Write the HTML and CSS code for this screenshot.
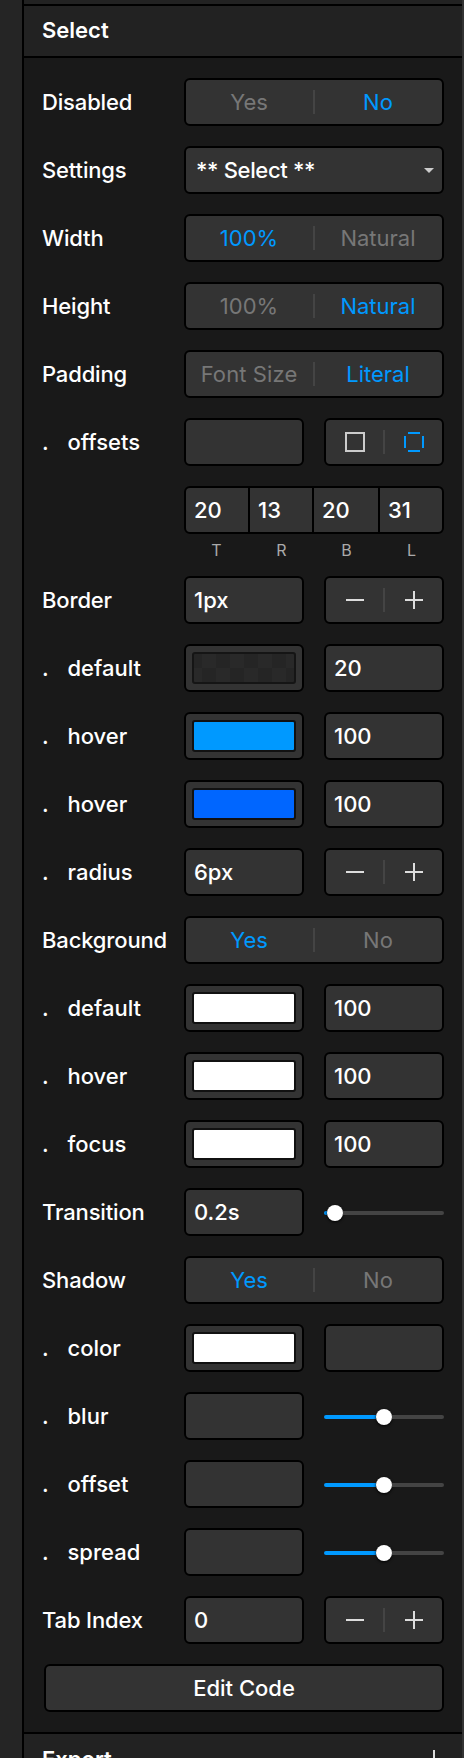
FILE: index.html
```html
<!DOCTYPE html>
<html lang="en">
<head>
<meta charset="utf-8">
<title>Select</title>
<link rel="stylesheet" href="styles.css">
</head>
<body>
<div class="app">
<main class="panel">
<header class="head">Select</header>
<section class="rows">
<div class="row"><span class="label">Disabled</span><div class="box seg"><span>Yes</span><i></i><span class="on">No</span></div></div>
<div class="row"><span class="label">Settings</span><div class="box select">** Select **<svg width="10" height="5" viewBox="0 0 10 5"><path d="M0 0h10L5 5z" fill="#ccc"/></svg></div></div>
<div class="row"><span class="label">Width</span><div class="box seg"><span class="on">100%</span><i></i><span>Natural</span></div></div>
<div class="row"><span class="label">Height</span><div class="box seg"><span>100%</span><i></i><span class="on">Natural</span></div></div>
<div class="row"><span class="label">Padding</span><div class="box seg"><span class="wide">Font Size</span><i></i><span class="on">Literal</span></div></div>
<div class="row"><span class="label sub">offsets</span><div class="box half"></div><div class="box half seg"><span><svg width="20" height="20"><path d="M1 1h18v18H1z" fill="none" stroke="#ccc" stroke-width="2"/></svg></span><i></i><span><svg width="20" height="20"><path d="M4 1h12M19 4v12M16 19H4M1 16V4" fill="none" stroke="#09f" stroke-width="2"/></svg></span></div></div>
<div class="row"><span class="label"></span><div class="box quad"><span>20</span><span>13</span><span>20</span><span>31</span></div></div>
<div class="sides"><span>T</span><span>R</span><span>B</span><span>L</span></div>
<div class="row"><span class="label">Border</span><div class="box half">1px</div><div class="box half seg"><span><svg width="18" height="18"><path d="M0 9h18" stroke="#ddd" stroke-width="2"/></svg></span><i></i><span><svg width="18" height="18"><path d="M0 9h18M9 0v18" stroke="#ddd" stroke-width="2"/></svg></span></div></div>
<div class="row"><span class="label sub">default</span><div class="box half well"><b class="checker"></b></div><div class="box half">20</div></div>
<div class="row"><span class="label sub">hover</span><div class="box half well"><b class="sky"></b></div><div class="box half">100</div></div>
<div class="row"><span class="label sub">hover</span><div class="box half well"><b class="blue"></b></div><div class="box half">100</div></div>
<div class="row"><span class="label sub">radius</span><div class="box half">6px</div><div class="box half seg"><span><svg width="18" height="18"><path d="M0 9h18" stroke="#ddd" stroke-width="2"/></svg></span><i></i><span><svg width="18" height="18"><path d="M0 9h18M9 0v18" stroke="#ddd" stroke-width="2"/></svg></span></div></div>
<div class="row"><span class="label">Background</span><div class="box seg"><span class="on">Yes</span><i></i><span>No</span></div></div>
<div class="row"><span class="label sub">default</span><div class="box half well"><b></b></div><div class="box half">100</div></div>
<div class="row"><span class="label sub">hover</span><div class="box half well"><b></b></div><div class="box half">100</div></div>
<div class="row"><span class="label sub">focus</span><div class="box half well"><b></b></div><div class="box half">100</div></div>
<div class="row"><span class="label">Transition</span><div class="box half">0.2s</div><div class="slider"><em style="width:3px"></em><u></u></div></div>
<div class="row"><span class="label">Shadow</span><div class="box seg"><span class="on">Yes</span><i></i><span>No</span></div></div>
<div class="row"><span class="label sub">color</span><div class="box half well"><b></b></div><div class="box half"></div></div>
<div class="row"><span class="label sub">blur</span><div class="box half"></div><div class="slider"><em style="width:52px"></em><u></u></div></div>
<div class="row"><span class="label sub">offset</span><div class="box half"></div><div class="slider"><em style="width:52px"></em><u></u></div></div>
<div class="row"><span class="label sub">spread</span><div class="box half"></div><div class="slider"><em style="width:52px"></em><u></u></div></div>
<div class="row"><span class="label">Tab Index</span><div class="box half">0</div><div class="box half seg"><span><svg width="18" height="18"><path d="M0 9h18" stroke="#ddd" stroke-width="2"/></svg></span><i></i><span><svg width="18" height="18"><path d="M0 9h18M9 0v18" stroke="#ddd" stroke-width="2"/></svg></span></div></div>
<div class="box button">Edit Code</div>
</section>
<header class="head">Export<svg width="18" height="18"><path d="M0 9h18M9 0v18" stroke="#ddd" stroke-width="2"/></svg></header>
</main>
</div>
</body>
</html>
```
FILE: styles.css
```css
* { box-sizing: border-box; }
body { margin: 0; background: #252525; overflow: hidden; }
.app {
  width: 464px; height: 1758px; overflow: hidden;
  padding-left: 22px;
  font: 500 22px/26px Inter, "Liberation Sans", sans-serif;
  color: #fff;
}
.panel {
  height: 1758px; padding-top: 4px; overflow: hidden;
  border-left: 2px solid #000; border-right: 2px solid #333;
  background: #222;
}
.head {
  display: flex; align-items: center; justify-content: space-between;
  height: 52px; padding: 0 19px 2px 18px;
  border-top: 2px solid #000;
  font-weight: 600;
}
.head:last-child { padding-bottom: 0; }
.rows {
  display: flex; flex-direction: column; gap: 20px;
  height: 1676px; padding: 20px 18px 0;
  border-top: 2px solid #000;
  background: #191919;
}
.row { display: flex; gap: 20px; height: 48px; flex: none; }
.label { width: 122px; line-height: 48px; letter-spacing: -0.15px; white-space: nowrap; flex: none; }
.sub { letter-spacing: 0; }
.sub::before { content: "."; display: inline-block; width: 25.5px; }
.box {
  flex: 1; height: 48px; padding-left: 8px;
  border: 2px solid #000; border-radius: 6px;
  background: #333; line-height: 44px; white-space: nowrap;
}
.half { flex: 0 0 120px; }
.seg { display: flex; align-items: center; padding: 0; font-weight: 400; color: #777; }
.seg > span { flex: 1; display: flex; justify-content: center; }
.seg:not(.half) > span { padding-right: 1px; }
.seg .wide { letter-spacing: 0.1px; }
.seg i { width: 2px; height: 24px; background: #444; }
.seg .on { color: #09f; }
.select { display: flex; align-items: center; justify-content: space-between; padding: 0 8px 0 10px; letter-spacing: -0.35px; }
.quad { display: grid; grid-template-columns: 62px 64px 66px 64px; padding: 0; }
.quad span { padding-left: 8px; }
.quad span + span { border-left: 2px solid #000; }
.sides {
  display: grid; grid-template-columns: repeat(4, 65px);
  height: 22px; margin: -14px 0 -6px 142px;
  font-size: 16px; font-weight: 400; line-height: 20px; color: #aaa; text-align: center;
}
.well { padding: 6px; }
.well b { display: block; height: 32px; border: 2px solid #111; border-radius: 3px; background: #fff; }
.well .sky { background: #09f; }
.well .blue { background: #06f; }
.well .checker { background: repeating-conic-gradient(#252525 0 25%, #292929 0 50%) 8px 0 / 28px 28px; border-color: #151515; }
.slider { flex: 0 0 120px; display: flex; align-items: center; height: 50px; }
.slider::after { content: ""; flex: 1; height: 4px; border-radius: 0 2px 2px 0; background: #444; }
.slider em { height: 4px; border-radius: 2px 0 0 2px; background: #09f; }
.slider u { width: 16px; height: 16px; border-radius: 50%; background: #fff; box-shadow: 0 1px 3px #000; }
.button { flex: none; margin-left: 2px; padding: 0; text-align: center; }
```
